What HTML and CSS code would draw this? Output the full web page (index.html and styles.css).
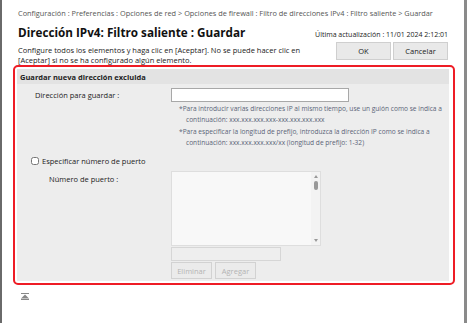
FILE: index.html
```html
<!DOCTYPE html>
<html>
<head>
<title>Dirección IPv4: Filtro saliente : Guardar</title>
<link rel="stylesheet" href="styles.css">
</head>
<body>
<div class="window">
  <div class="page">
    <div class="breadcrumb">Configuración : Preferencias : Opciones de red &gt; Opciones de firewall : Filtro de direcciones IPv4 : Filtro saliente &gt; Guardar</div>

    <div class="title-row">
      <h1 class="page-title">Dirección IPv4: Filtro saliente : Guardar</h1>
      <span class="updated">Última actualización : 11/01 2024 2:12:01</span>
    </div>

    <div class="intro-row">
      <p class="intro">Configure todos los elementos y haga clic en [Aceptar]. No se puede hacer clic en [Aceptar] si no se ha configurado algún elemento.</p>
      <div class="actions">
        <button class="btn">OK</button>
        <button class="btn">Cancelar</button>
      </div>
    </div>

    <div class="highlight">
      <div class="panel">
        <div class="panel-head">Guardar nueva dirección excluida</div>

        <div class="field-row">
          <label class="field-label">Dirección para guardar :</label>
          <input type="text" class="text-input wide">
        </div>
        <div class="notes">
          <p>*Para introducir varias direcciones IP al mismo tiempo, use un guión como se indica a<br><span class="indent">continuación: xxx.xxx.xxx.xxx-xxx.xxx.xxx.xxx</span></p>
          <p>*Para especificar la longitud de prefijo, introduzca la dirección IP como se indica a<br><span class="indent">continuación: xxx.xxx.xxx.xxx/xx (longitud de prefijo: 1-32)</span></p>
        </div>

        <label class="check-row"><input type="checkbox" class="check"> Especificar número de puerto</label>

        <div class="port-row">
          <span class="port-label">Número de puerto :</span>
          <div class="port-controls">
            <div class="listbox">
              <div class="scroll">
                <span class="arrow up"></span>
                <span class="thumb"></span>
                <span class="arrow down"></span>
              </div>
            </div>
            <input type="text" class="text-input port-input" disabled>
            <div class="port-buttons">
              <button class="btn small" disabled>Eliminar</button>
              <button class="btn small" disabled>Agregar</button>
            </div>
          </div>
        </div>
      </div>
    </div>

    <div class="to-top">
      <svg width="8" height="7" viewBox="0 0 8 7"><rect x="0" y="0" width="8" height="1" fill="#888"/><path d="M4 1.5 L7.5 5 L0.5 5 Z" fill="#888"/><rect x="0" y="5.5" width="8" height="1.5" fill="#888"/></svg>
    </div>
  </div>
</div>
</body>
</html>
```

FILE: styles.css
```css
html, body {
  margin: 0;
  padding: 0;
  background: #fff;
}

body {
  font-family: "Open Sans", "Noto Sans", sans-serif;
  color: #222;
  width: 468px;
  height: 323px;
  overflow: hidden;
}

.window {
  height: 323px;
  border-left: 2px solid #6a6a6a;
  border-right: 3px solid #8a8a8a;
  box-sizing: border-box;
  width: 467px;
}

.page {
  padding: 8px 16px 0 11px;
}

.breadcrumb {
  font-size: 7.35px;
  color: #555;
  padding-left: 5px;
  line-height: 10px;
  white-space: nowrap;
}

.title-row {
  display: flex;
  justify-content: space-between;
  align-items: baseline;
  margin-top: 6px;
  padding-left: 5px;
}

.page-title {
  margin: 0;
  font-size: 11.7px;
  font-weight: bold;
  color: #111;
  line-height: 16px;
}

.updated {
  font-size: 7px;
  color: #222;
}

.intro-row {
  display: flex;
  justify-content: space-between;
  margin-top: 2px;
  padding-left: 5px;
}

.intro {
  margin: 3px 0 0;
  font-size: 7.5px;
  line-height: 10px;
  width: 310px;
  color: #222;
}

.actions {
  display: flex;
  gap: 2px;
}

.btn {
  font-family: inherit;
  font-size: 7.5px;
  color: #222;
  background: #e9e9e9;
  border: 1px solid #cfcfcf;
  border-radius: 0;
  width: 55px;
  height: 18px;
  padding: 0;
}

.highlight {
  margin-top: 0;
  border: 2px solid #ee1c25;
  border-radius: 5px;
  padding: 2px 4px 2px 2px;
  width: 442px;
  box-sizing: border-box;
}

.panel {
  background: #ededed;
  height: 212px;
  font-size: 7.5px;
}

.panel-head {
  background: #e3e3e3;
  font-weight: bold;
  color: #222;
  padding: 3px 3px 2px;
  line-height: 10px;
}

.field-row {
  display: flex;
  align-items: center;
  margin-top: 4px;
}

.field-label {
  width: 136px;
  padding-left: 18px;
  color: #222;
}

.text-input {
  height: 14px;
  border: 1px solid #a8a8a8;
  background: #fff;
  box-sizing: border-box;
  padding: 0;
}

.wide {
  width: 178px;
}

.notes {
  margin-left: 162px;
  margin-top: 1px;
  color: #5a6478;
  font-size: 6.6px;
  white-space: nowrap;
}

.notes p {
  margin: 0 0 1px;
  line-height: 11px;
}

.indent {
  padding-left: 7px;
}

.check-row {
  display: flex;
  align-items: center;
  margin: 8px 0 0 14px;
  color: #222;
  gap: 3px;
  line-height: 10px;
}

.check {
  margin: 0;
  width: 8px;
  height: 8px;
}

.port-row {
  display: flex;
  margin-top: 5px;
}

.port-label {
  width: 122px;
  padding-left: 32px;
  margin-top: 3px;
}

.port-controls {
  display: flex;
  flex-direction: column;
}

.listbox {
  width: 150px;
  height: 75px;
  background: #f8f8f8;
  border: 1px solid #dedede;
  box-sizing: border-box;
  display: flex;
  justify-content: flex-end;
}

.scroll {
  width: 9px;
  background: #f3f3f3;
  display: flex;
  flex-direction: column;
  align-items: center;
  padding: 3px 0;
  box-sizing: border-box;
}

.arrow {
  width: 0;
  height: 0;
  border-left: 2.5px solid transparent;
  border-right: 2.5px solid transparent;
}

.arrow.up {
  border-bottom: 3px solid #999;
}

.arrow.down {
  border-top: 3px solid #999;
  margin-top: auto;
}

.thumb {
  width: 4px;
  height: 9px;
  background: #999;
  border-radius: 2px;
  margin-top: 3px;
}

.port-input {
  width: 110px;
  height: 14px;
  border-color: #d6d6d6;
  background: #eeeeee;
  margin-top: 1px;
}

.port-buttons {
  display: flex;
  gap: 3px;
  margin-top: 1px;
}

.btn.small {
  width: 41px;
  height: 17px;
  color: #b4b4b4;
  background: #ebebeb;
  border-color: #d2d2d2;
}

.to-top {
  padding: 8px 0 0 8px;
}

.to-top svg {
  display: block;
}
```
